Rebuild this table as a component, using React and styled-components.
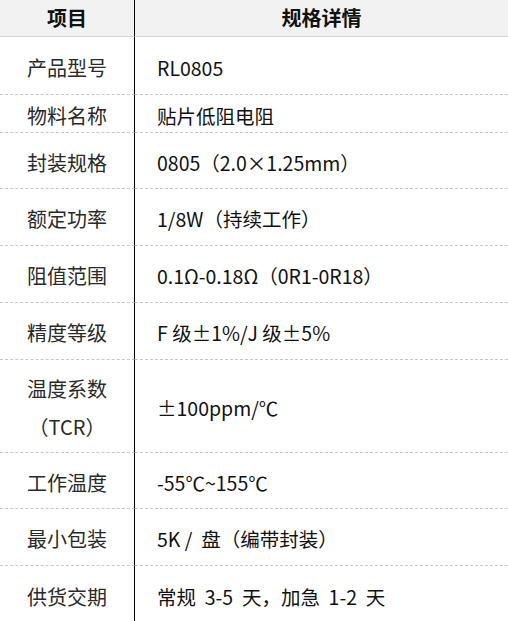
import styled, { createGlobalStyle } from 'styled-components';

const GlobalStyle = createGlobalStyle`
  html, body {
    margin: 0;
    padding: 0;
    background: #ffffff;
  }
  body {
    font-family: "Noto Sans CJK SC", "Noto Sans", sans-serif;
    color: #1c1c1c;
  }
`;

const SpecTable = styled.div`
  width: 508px;
  display: grid;
  grid-template-columns: 135px 1fr;
`;

const Cell = styled.div`
  box-sizing: border-box;
  height: ${(p) => p.$h}px;
  display: flex;
  flex-direction: column;
  justify-content: center;
  padding-top: 4px;
  font-size: 20px;
  line-height: 38px;
  border-bottom: ${(p) => (p.$last ? 'none' : '1px dashed #c8c8c8')};
`;

const HeadCell = styled(Cell)`
  background: #f2f2f2;
  font-weight: 700;
  align-items: center;
  padding-top: 0;
  color: #111;
  border-bottom: 1px solid #d6d6d6;
`;

const LabelCell = styled(Cell)`
  align-items: center;
  border-right: 1px solid #000;
  color: #2a2a2a;
  text-align: center;
`;

const HeadLabel = styled(HeadCell)`
  border-right: 1px solid #000;
`;

const ValueCell = styled(Cell)`
  padding-left: 22px;
  font-size: 19.5px;
  white-space: pre;
  color: #111;
`;

const rows = [
  { label: ['产品型号'], value: 'RL0805', h: 58 },
  { label: ['物料名称'], value: '贴片低阻电阻', h: 38 },
  { label: ['封装规格'], value: '0805（2.0×1.25mm）', h: 56 },
  { label: ['额定功率'], value: '1/8W（持续工作）', h: 57 },
  { label: ['阻值范围'], value: '0.1Ω-0.18Ω（0R1-0R18）', h: 57 },
  { label: ['精度等级'], value: 'F 级±1%/J 级±5%', h: 57 },
  { label: ['温度系数', '（TCR）'], value: '±100ppm/℃', h: 93 },
  { label: ['工作温度'], value: '-55℃~155℃', h: 56 },
  { label: ['最小包装'], value: '5K /  盘（编带封装）', h: 57 },
  { label: ['供货交期'], value: '常规  3-5  天，加急  1-2  天', h: 57 },
];

export default function App() {
  return (
    <>
      <GlobalStyle />
      <SpecTable>
        <HeadLabel $h={37}>项目</HeadLabel>
        <HeadCell $h={37}>规格详情</HeadCell>
        {rows.map((r, i) => {
          const last = i === rows.length - 1;
          return [
            <LabelCell key={`l${i}`} $h={r.h} $last={last}>
              {r.label.map((t) => (
                <span key={t}>{t}</span>
              ))}
            </LabelCell>,
            <ValueCell key={`v${i}`} $h={r.h} $last={last}>
              {r.value}
            </ValueCell>,
          ];
        })}
      </SpecTable>
    </>
  );
}
